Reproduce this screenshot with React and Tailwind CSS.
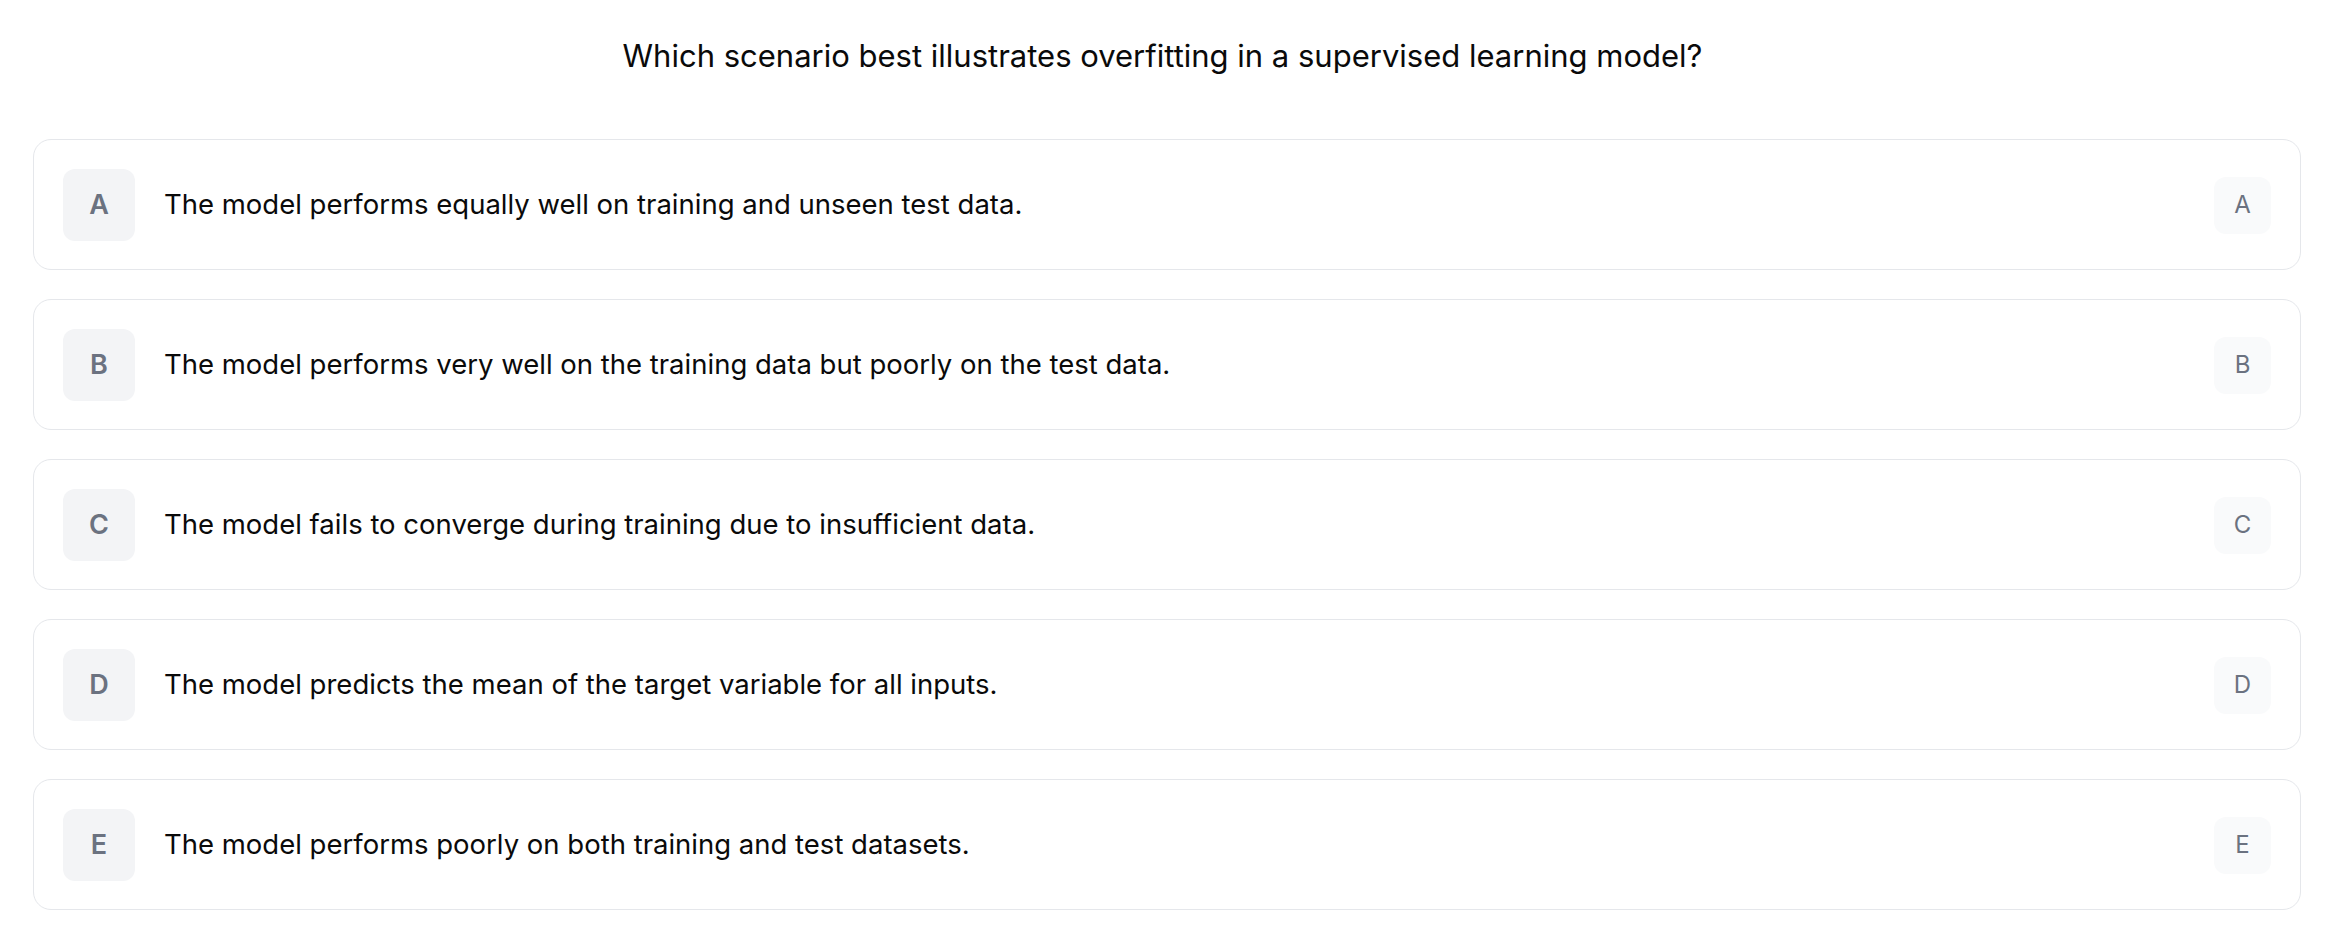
import React from "react";

const options = [
  { key: "A", text: "The model performs equally well on training and unseen test data." },
  { key: "B", text: "The model performs very well on the training data but poorly on the test data." },
  { key: "C", text: "The model fails to converge during training due to insufficient data." },
  { key: "D", text: "The model predicts the mean of the target variable for all inputs." },
  { key: "E", text: "The model performs poorly on both training and test datasets." },
];

function OptionCard({ option }) {
  return (
    <div className="flex items-center gap-[29px] rounded-[18px] border border-[#e5e7eb] bg-white px-[29px] pt-[29px] pb-[28px]">
      {/* letter badge */}
      <div className="flex h-[72px] w-[72px] shrink-0 items-center justify-center rounded-[12px] bg-[#f3f4f6] text-[27px] font-semibold text-[#6b7280]">
        {option.key}
      </div>
      <div className="flex-1 text-[27.5px] text-[#0a0a0a]">{option.text}</div>
      {/* shortcut hint */}
      <div className="flex h-[57px] w-[57px] shrink-0 items-center justify-center rounded-[12px] bg-[#f9fafb] text-[24px] text-[#6b7280]">
        {option.key}
      </div>
    </div>
  );
}

export default function App() {
  return (
    <div
      className="min-h-screen bg-white"
      style={{ fontFamily: "Inter, 'Noto Sans', sans-serif" }}
    >
      <div className="flex h-[113px] items-center justify-center text-[31px] text-[#0a0a0a]">
        Which scenario best illustrates overfitting in a supervised learning model?
      </div>
      <div className="ml-[33px] mr-[24px] mt-[26px] flex flex-col gap-[29px]">
        {options.map((o) => (
          <OptionCard key={o.key} option={o} />
        ))}
      </div>
    </div>
  );
}
